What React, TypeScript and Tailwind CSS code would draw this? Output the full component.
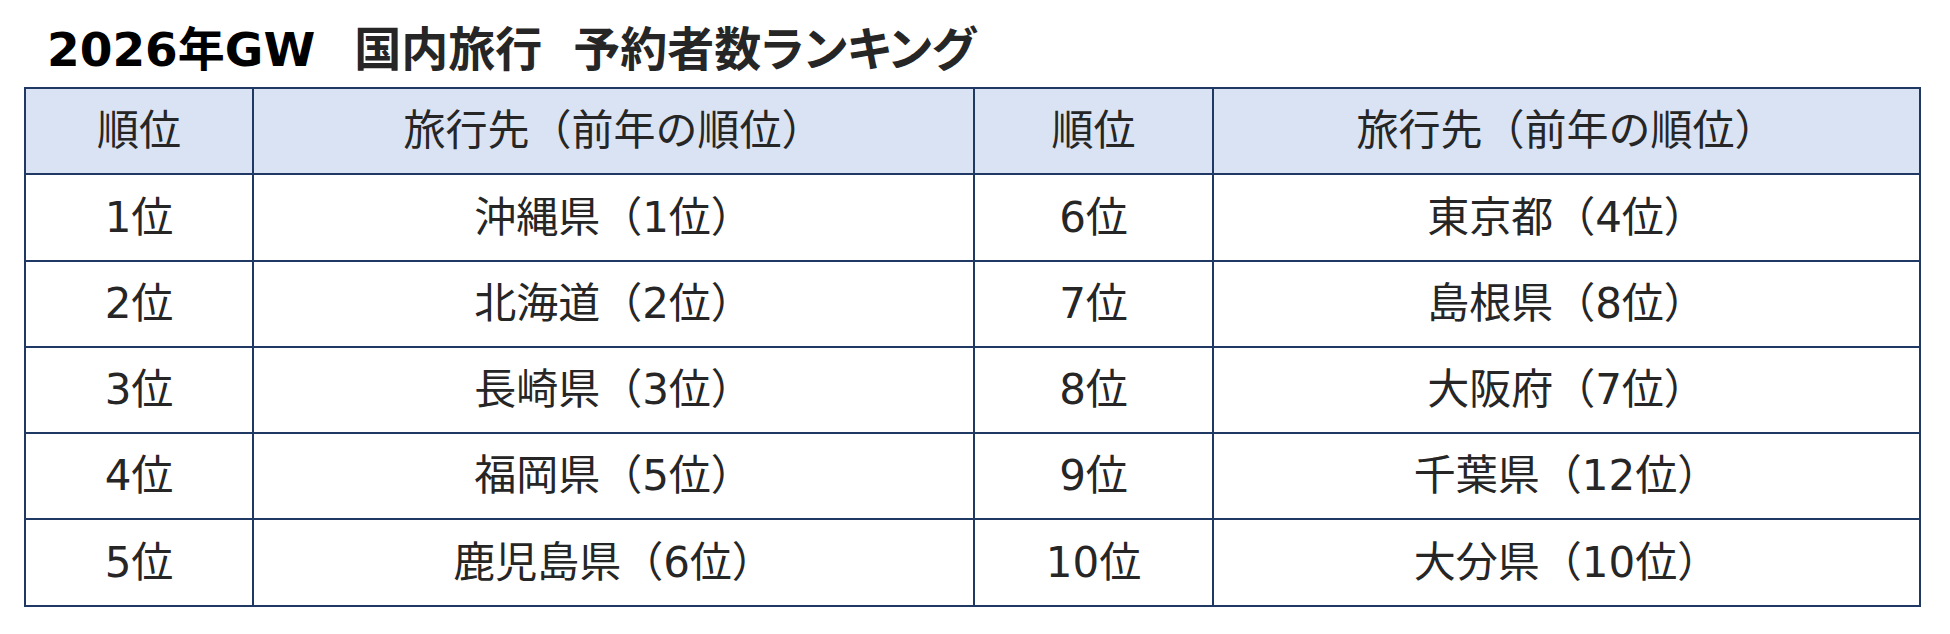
import React from "react";

const rows: [string, string, string, string][] = [
  ["1位", "沖縄県（1位）", "6位", "東京都（4位）"],
  ["2位", "北海道（2位）", "7位", "島根県（8位）"],
  ["3位", "長崎県（3位）", "8位", "大阪府（7位）"],
  ["4位", "福岡県（5位）", "9位", "千葉県（12位）"],
  ["5位", "鹿児島県（6位）", "10位", "大分県（10位）"],
];

function Cell({ children, head }: { children: React.ReactNode; head?: boolean }) {
  return (
    <div
      className={
        head
          ? "flex items-center justify-center bg-[#dae3f3] text-[42px] leading-none text-[#262626]"
          : "flex items-center justify-center bg-white text-[42px] leading-none text-[#262626]"
      }
    >
      {children}
    </div>
  );
}

export default function App() {
  return (
    <div className="w-[1950px] h-[634px] bg-white pt-[26px] pl-[24px] font-['DejaVu_Sans','Noto_Sans_CJK_JP',sans-serif]">
      <div className="ml-[23px] h-[46px] flex items-center text-[47px] font-bold leading-none whitespace-nowrap">
        <span className="text-black">2026年GW</span>
        <span className="ml-[39px] text-[#262626]">国内旅行</span>
        <span className="ml-[31px] text-[#262626]">
          予約者数<span className="[font-feature-settings:'palt']">ランキング</span>
        </span>
      </div>
      <div className="mt-[15px] w-[1897px] grid grid-cols-[226px_719px_237px_705px] grid-rows-[84px_85px_84px_84px_84px_85px] gap-[2px] p-[2px] bg-[#203864]">
        <Cell head>順位</Cell>
        <Cell head>旅行先（前年の順位）</Cell>
        <Cell head>順位</Cell>
        <Cell head>旅行先（前年の順位）</Cell>
        {rows.map((r, i) => (
          <React.Fragment key={i}>
            <Cell>{r[0]}</Cell>
            <Cell>{r[1]}</Cell>
            <Cell>{r[2]}</Cell>
            <Cell>{r[3]}</Cell>
          </React.Fragment>
        ))}
      </div>
    </div>
  );
}
